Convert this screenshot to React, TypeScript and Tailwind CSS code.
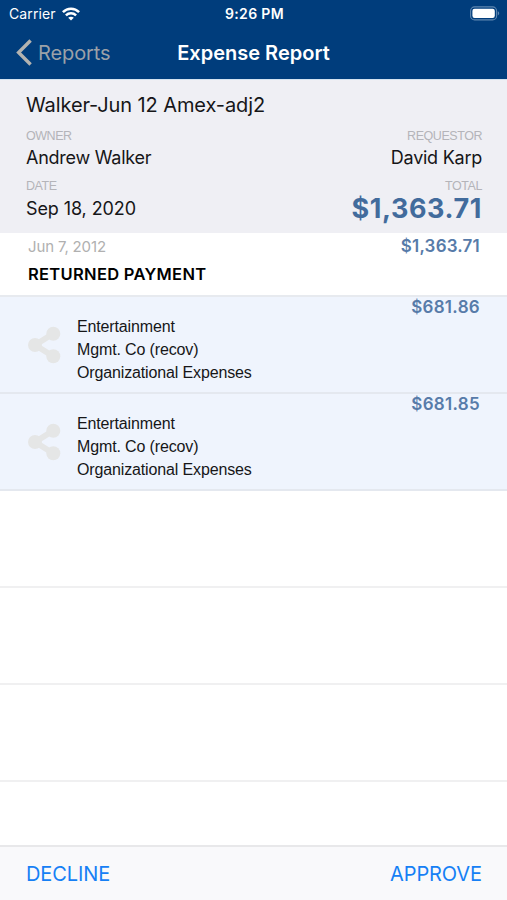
type Split = {
  id: number
  amount: string
  lines: string[]
}

const splits: Split[] = [
  { id: 1, amount: '$681.86', lines: ['Entertainment', 'Mgmt. Co (recov)', 'Organizational Expenses'] },
  { id: 2, amount: '$681.85', lines: ['Entertainment', 'Mgmt. Co (recov)', 'Organizational Expenses'] },
]

const WifiIcon = () => (
  <svg width="18" height="14" viewBox="0 0 18 14" fill="none" stroke="white" strokeWidth="2.5">
    <path d="M0.9 5.1C5.4 0.5 12.6 0.5 17.1 5.1" />
    <path d="M3.9 8.3C6.8 5.5 11.2 5.5 14.1 8.3" />
    <path d="M9 13.6L6.2 10.7C7.8 9.3 10.2 9.3 11.8 10.7Z" fill="white" stroke="none" />
  </svg>
)

const BatteryIcon = () => (
  <svg width="31" height="15" viewBox="0 0 31 15" fill="none">
    <rect x="1.6" y="0.9" width="26" height="13" rx="4" stroke="#5f87b0" strokeWidth="1.1" />
    <rect x="3.4" y="2.8" width="22.4" height="9.2" rx="2.2" fill="white" />
    <path d="M28.8 5.2C30.7 5.9 30.7 8.7 28.8 9.4Z" fill="#5f87b0" />
  </svg>
)

const ShareIcon = () => (
  <svg width="33" height="38" viewBox="0 0 33 38" fill="#e5e6e6" stroke="#e5e6e6">
    <path d="M25.5 7.5L7 19L25.5 30.5" fill="none" strokeWidth="5.8" />
    <circle cx="25.3" cy="7.7" r="7" stroke="none" />
    <circle cx="7" cy="19" r="7" stroke="none" />
    <circle cx="25.3" cy="30.3" r="7" stroke="none" />
  </svg>
)

const StatusBar = () => (
  <div className="grid h-[27px] grid-cols-3 items-center pl-[9px] pr-[7px] text-[14px] leading-[20px]">
    <div className="flex items-center gap-[6px]">
      <span className="tracking-[0.1px]">Carrier</span>
      <WifiIcon />
    </div>
    <span className="text-center font-semibold tracking-[0.35px]">9:26 PM</span>
    <div className="flex justify-end">
      <BatteryIcon />
    </div>
  </div>
)

const NavBar = () => (
  <div className="grid h-[51px] grid-cols-[154px_1fr_154px] items-center">
    <button className="flex items-center gap-[6px] pl-[16px] text-[20px] tracking-[-0.1px] text-[#9ba1a8]">
      <svg width="16" height="27" viewBox="0 0 16 27" fill="none" stroke="#b3b3b0" strokeWidth="3.4">
        <path d="M14.6 1.5L2.6 13.5L14.6 25.5" />
      </svg>
      <span>Reports</span>
    </button>
    <h1 className="text-center text-[20px] font-semibold">Expense Report</h1>
  </div>
)

const Label = ({ children }: { children: string }) => (
  <div className="h-[16px] font-['Liberation_Sans',sans-serif] text-[12.5px] leading-[18px] tracking-[-0.45px] text-[#b4b4b9]">
    {children}
  </div>
)

const ReportHeader = () => (
  <section className="h-[154px] border-t border-[#d3e3f0] bg-[#efeff4] pl-[26px] pr-[25px]">
    <h2 className="pt-[11px] text-[20px] leading-[28px] tracking-[-0.1px]">Walker-Jun 12 Amex-adj2</h2>
    <div className="mt-[8px] flex justify-between text-[18px] tracking-[-0.25px]">
      <div>
        <Label>OWNER</Label>
        <div className="leading-[30px]">Andrew Walker</div>
      </div>
      <div className="text-right">
        <Label>REQUESTOR</Label>
        <div className="leading-[30px]">David Karp</div>
      </div>
    </div>
    <div className="mt-[4px] flex justify-between text-[18px] tracking-[-0.1px]">
      <div>
        <Label>DATE</Label>
        <div className="leading-[32px]">Sep 18, 2020</div>
      </div>
      <div className="text-right">
        <Label>TOTAL</Label>
        <div className="text-[27px] font-bold leading-[31px] tracking-[0.6px] text-[#426b9c]">$1,363.71</div>
      </div>
    </div>
  </section>
)

const PaymentRow = () => (
  <div className="flex h-[64px] justify-between border-b-2 border-[#e7eaef] pl-[28px] pr-[27px]">
    <div>
      <div className="pt-[4px] text-[15px] leading-[20px] tracking-[-0.15px] text-[#b0b0b0]">Jun 7, 2012</div>
      <div className="pt-[6px] text-[16.5px] font-semibold leading-[23px] tracking-[0.3px] text-black">RETURNED PAYMENT</div>
    </div>
    <div className="pt-[3px] text-[17px] font-semibold leading-[20px] tracking-[0.2px] text-[#577ba9]">$1,363.71</div>
  </div>
)

const SplitRow = ({ split }: { split: Split }) => (
  <div className="flex h-[97px] border-b-2 border-[#e4e8ef] bg-[#eff4fd] pl-[28px] pr-[27px]">
    <div className="flex w-[49px] items-center">
      <ShareIcon />
    </div>
    <div className="flex-1 pt-[18px] font-['Liberation_Sans',sans-serif] text-[16px] leading-[23px] tracking-[-0.14px]">
      {split.lines.map(line => (
        <div key={line}>{line}</div>
      ))}
    </div>
    <div className="text-[17px] font-semibold leading-[20px] tracking-[0.3px] text-[#577ba9]">{split.amount}</div>
  </div>
)

function App() {
  return (
    <div className="flex h-[900px] w-[507px] flex-col overflow-hidden bg-white font-['Inter',sans-serif] text-[#161618]">
      <header className="h-[79px] shrink-0 bg-[#003d7c] text-white">
        <StatusBar />
        <NavBar />
      </header>
      <ReportHeader />
      <main className="flex-1">
        <PaymentRow />
        {splits.map(split => (
          <SplitRow key={split.id} split={split} />
        ))}
        {[1, 2, 3].map(n => (
          <div key={n} className="h-[97px] border-b-2 border-[#f0f0f1]" />
        ))}
      </main>
      <footer className="flex h-[55px] items-center justify-between border-t-2 border-[#e8e8ea] bg-[#f9f9fb] pl-[26px] pr-[25px] text-[20px] tracking-[-0.1px] text-[#1680f5]">
        <button>DECLINE</button>
        <button>APPROVE</button>
      </footer>
    </div>
  )
}

export default App
